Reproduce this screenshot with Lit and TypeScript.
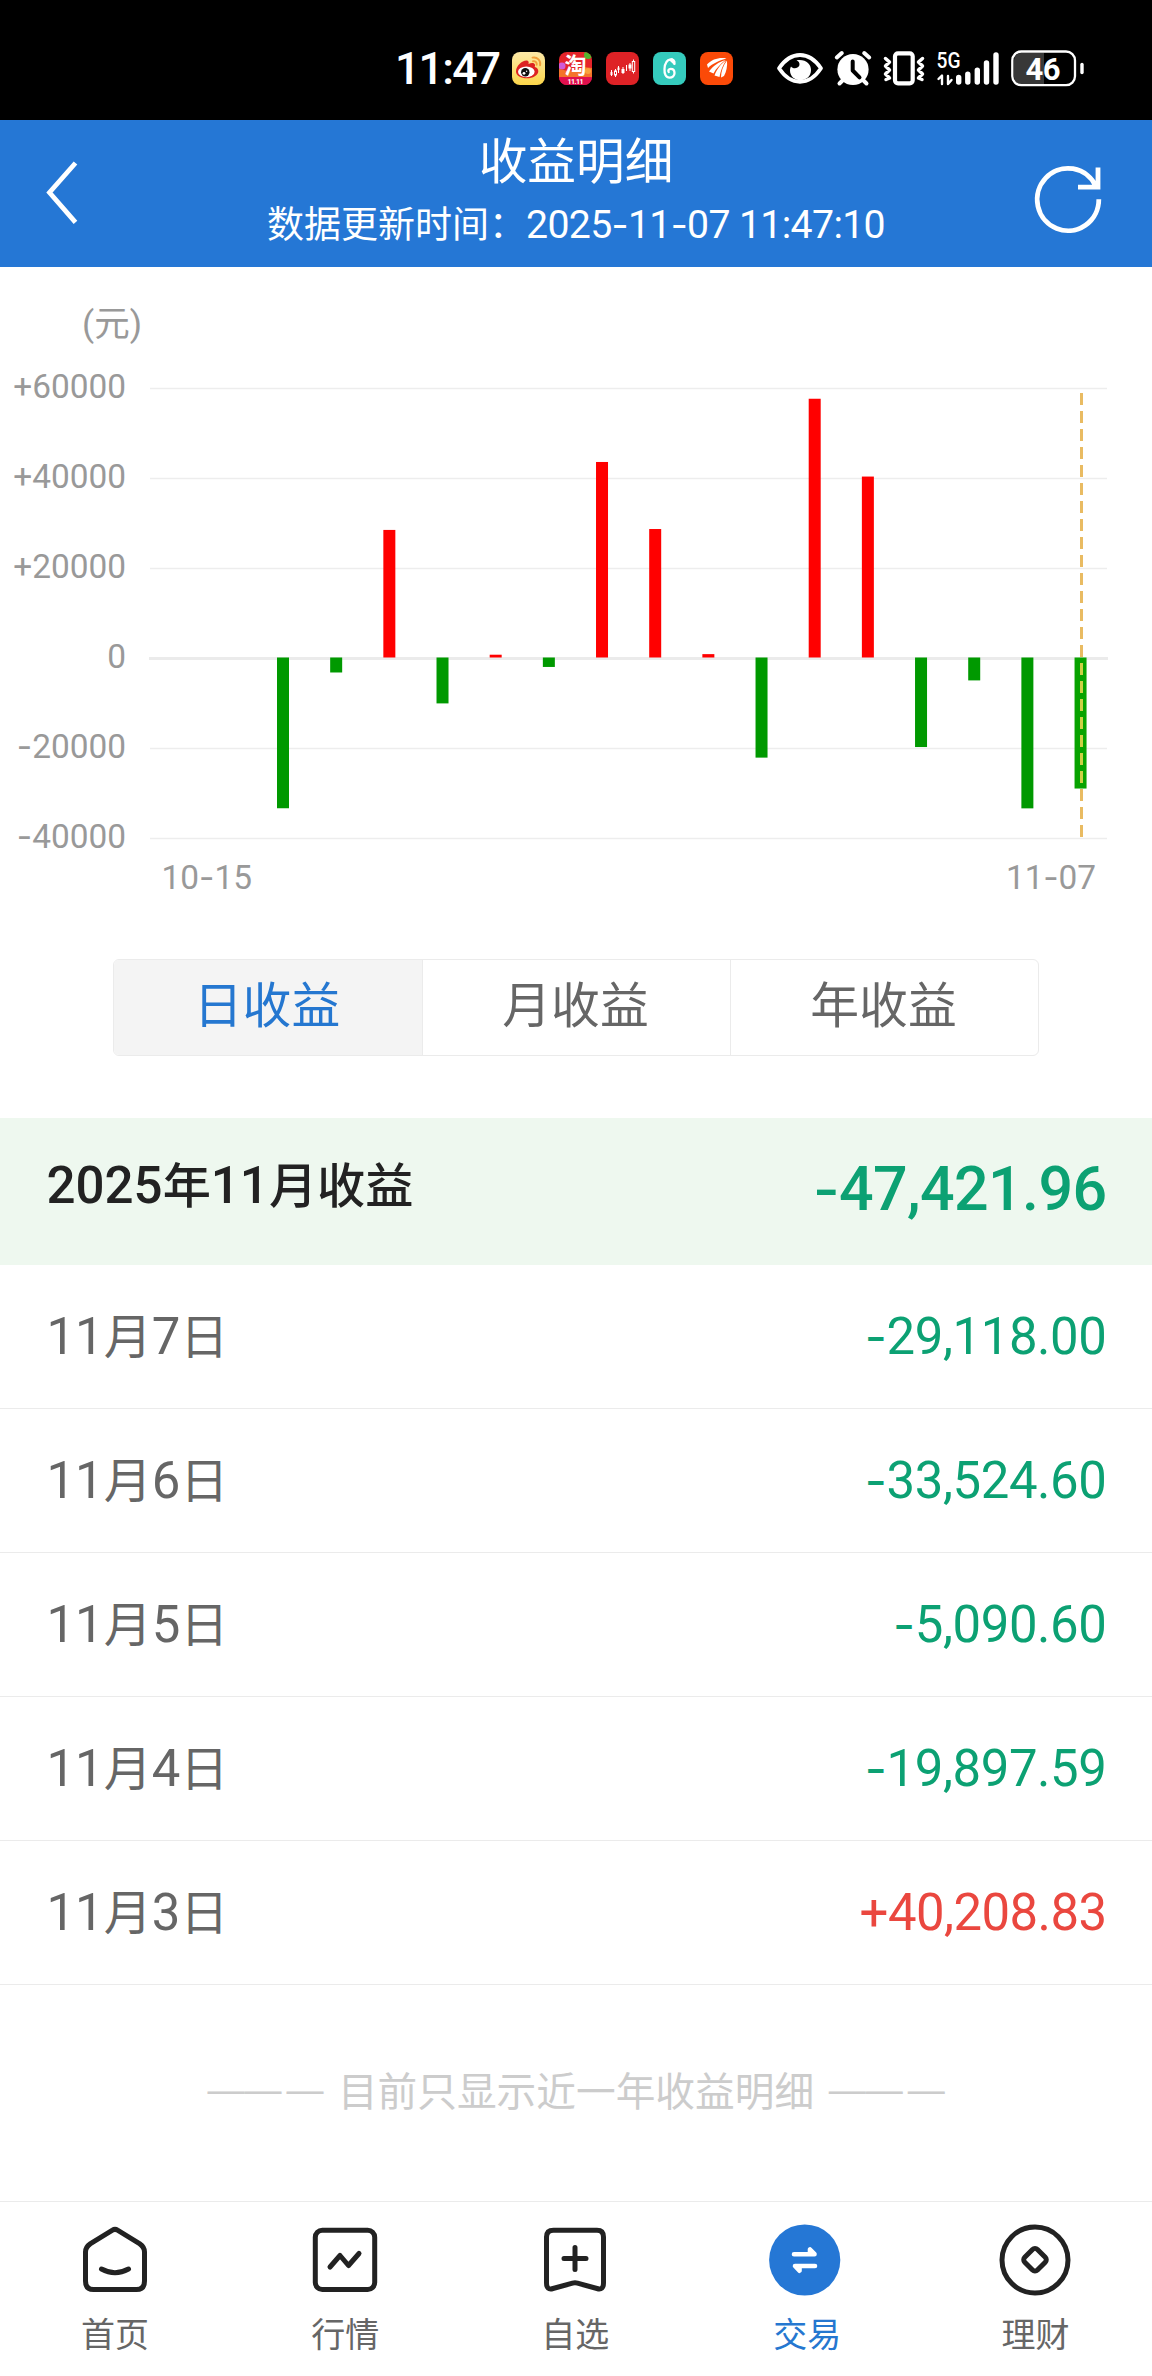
import { LitElement, html, svg, css, nothing } from "lit";
import { customElement, property, state } from "lit/decorators.js";
import { classMap } from "lit/directives/class-map.js";

const FONT = css`Roboto, "Noto Sans CJK SC", sans-serif`;

/** Splits mixed text so that digits and dashes can be sized apart from Chinese characters. */
const mixed = (text: string) =>
  (text.match(/-|[+0-9:., ]+|[^-+0-9:., ]+/g) ?? []).map((part) =>
    part === "-"
      ? html`<span class="dash">-</span>`
      : /^[+0-9:., ]+$/.test(part)
        ? html`<span class="num">${part}</span>`
        : part,
  );

const mixedStyles = css`
  .num { font-size: 1.06em; line-height: 0; }
  .dash { font-family: Inter, sans-serif; line-height: 0; }
`;

@customElement("status-bar")
class StatusBar extends LitElement {
  static styles = css`
    :host { display: block; background: #000; color: #fff; font-family: ${FONT}; }
    .bar { display: flex; align-items: center; height: 120px; padding: 17px 66px 0 395px; box-sizing: border-box; }
    .time { font-size: 44.5px; font-weight: 500; line-height: 48px; width: 117px; white-space: nowrap; letter-spacing: -1.7px; }
    .apps { display: flex; gap: 14px; }
    .system { display: flex; align-items: center; margin-left: auto; }
    svg { display: block; overflow: visible; }
    .tao { font: 700 22px "Noto Sans CJK SC", sans-serif; fill: #fff; }
    .sale { font: 700 7px Roboto, sans-serif; fill: #fff; }
    .net { font: 500 21.5px Roboto, sans-serif; fill: #fff; }
    .level { font: 700 31px Roboto, sans-serif; fill: #fff; }
  `;

  render() {
    return html`<div class="bar">
      <span class="time">11:47</span>
      <div class="apps">
        <svg width="33" height="33" viewBox="0 0 33 33">
          <defs><linearGradient id="wb" x1="0" y1="0" x2="0" y2="1"><stop offset="0" stop-color="#fde9a8" /><stop offset="1" stop-color="#fcd64a" /></linearGradient></defs>
          <rect width="33" height="33" rx="8" fill="url(#wb)" />
          <path d="M4 19.5C4 14 10 8.5 14.5 8.6c2.4.1 2.4 2 2 3.3 3-1.300 6-1.200 6.500.8.2 1-.1 1.800-.3 2.300 2.300.6 3.600 2 3.600 4.200 0 4.100-5.600 7.100-11.300 7.100C9 26.300 4 23.500 4 19.500z" fill="#dd2222" />
          <ellipse cx="14.300" cy="19.800" rx="8.300" ry="5.400" fill="#fff" />
          <circle cx="13.300" cy="20.300" r="4.200" fill="#111" />
          <circle cx="12" cy="21.300" r="1.400" fill="#fff" /><circle cx="14.600" cy="19.300" r=".7" fill="#fff" />
          <path d="M20.500 5.600c4.700-1 8.700 3 7.600 7.800M21 9.200c2.200-.5 4.200 1.300 3.700 3.600" fill="none" stroke="#f2a03a" stroke-width="1.900" stroke-linecap="round" />
        </svg>
        <svg width="33" height="33" viewBox="0 0 33 33">
          <defs><clipPath id="tb"><rect width="33" height="33" rx="8" /></clipPath></defs>
          <g clip-path="url(#tb)">
            <rect width="33" height="33" fill="#e5242a" />
            <circle cx="3" cy="14" r="3.500" fill="#d05ad8" /><circle cx="29" cy="3" r="4" fill="#53b52e" />
            <path d="M0 17l9 2 8-1 8-3 8 1v10H0z" fill="#f4742a" /><circle cx="29" cy="19" r="3" fill="#f9a23c" />
            <rect y="25" width="33" height="8" fill="#e0104e" />
          </g>
          <text class="tao" x="16.500" y="20.500" text-anchor="middle">淘</text>
          <text class="sale" x="16.500" y="31.500" text-anchor="middle" textLength="16">11.11</text>
        </svg>
        <svg width="33" height="33" viewBox="0 0 33 33">
          <rect width="33" height="33" rx="8" fill="#de2226" />
          <g fill="none" stroke="#fff" stroke-width="1"><path d="M5.500 18v6M9.500 17v8M12.500 14v7M17 15v7M20.500 13v6M24 11v8M27.500 7.500v14" />
            <rect x="8.500" y="19" width="2" height="4" fill="#de2226" /><rect x="26.300" y="9.500" width="2.400" height="10" fill="#de2226" /></g>
          <path d="M4.500 20h2v3h-2zM15.500 17h3v4h-3zM22.500 12.500h3v4h-3zM11.500 15.500h2v2.500h-2z" fill="#fff" />
        </svg>
        <svg width="33" height="33" viewBox="0 0 33 33">
          <rect width="33" height="33" rx="8" fill="#35cbbd" />
          <path d="M21.500 11.800c.5-3.600-2-4.700-4-4.400-3.900.5-5.700 4.600-6 9.600-.3 5.200 1.500 8.700 5 8.700 3 0 5-1.900 5-4.600s-1.700-4.300-3.800-4.300c-2 0-3 1.600-2 3.200" fill="none" stroke="#fff" stroke-width="2.300" stroke-linecap="round" />
          <path d="M16.500 8.500l2.500-2.800 3 4.500-.5 3z" fill="#fff" />
        </svg>
        <svg width="33" height="33" viewBox="0 0 33 33">
          <rect width="33" height="33" rx="8" fill="#fb4a08" />
          <path d="M7 12.500C12 7 20 5 26.500 6.500 20 8 12.500 11.500 8 16zM9 19.500C13 14 19.500 9.500 25.500 8 20.500 12 16 16.500 13.500 21.500zM14.500 23.500C17 17 21 11.500 26 8.500 22.500 14 20.500 19 19.500 25zM21 25.500c0-6 2-12 6-17 .5 6-.5 11-3 15.500z" fill="#fff" />
        </svg>
      </div>
      <div class="system">
        <svg width="309" height="40" viewBox="777 48 309 40" fill="none" stroke="#fff" stroke-linecap="round" stroke-linejoin="round">
          <path d="M779 67.300C785 58.500 792 54 800 54s15 4.500 21 13.300C815 76.300 808 80.800 800 80.800S785 76.300 779 67.300z" stroke-width="3.800" />
          <path d="M796.500 59.300c9-1.500 14.500 3.500 14.500 9.700 0 6-4.700 10.300-10.700 10.300-6 0-10.300-4.300-10.300-9.700 0-1.700.3-3 1-4.200 1.500 2.500 6.800 2.500 8.200-.6.900-2.200-.4-4.700-2.700-5.500z" fill="#fff" stroke="none" />
          <circle cx="853" cy="68.500" r="15.600" fill="#fff" stroke="none" />
          <path d="M836.800 56.500l5-4.500M869.200 56.500l-5-4.500M844 78l-4.500 4.500M862 78l4.500 4.500" stroke-width="4" />
          <path d="M852.700 60.500v9l6.800 6.800" stroke="#000" stroke-width="4" />
          <rect x="895" y="52.300" width="17.700" height="30" rx="3" stroke-width="4.200" />
          <path d="M885.500 57.500l4 3.500-4 4 4 4-4 4 4 4-3.500 1.500M922.500 57.500l-4 3.500 4 4-4 4 4 4-4 4 3.500 1.500" stroke-width="3.500" />
          <text class="net" x="936.500" y="67" stroke="none" textLength="24" lengthAdjust="spacingAndGlyphs">5G</text>
          <path d="M938.500 78l3.500-3.500V83M948 75v8l3.500-4" stroke-width="2.400" />
          <path d="M958.700 76.500v4.500M967.800 73.300V81M977.300 69.300V81M986.500 62V81M996 54V81" stroke-width="5.400" />
          <path d="M1044 52h-23a7 7 0 0 0-7 7v17a7 7 0 0 0 7 7h23z" fill="#383838" stroke="none" />
          <rect x="1012.300" y="50.500" width="62.700" height="33.700" rx="9" stroke-width="2.300" />
          <path d="M1082 63.500v8" stroke-width="3.400" />
          <text class="level" x="1043" y="78.500" stroke="none" text-anchor="middle" textLength="35">46</text>
        </svg>
      </div>
    </div>`;
  }
}

@customElement("page-header")
class PageHeader extends LitElement {
  @property() time = "";
  static styles = [
    mixedStyles,
    css`
      :host { display: block; background: #2577d5; color: #fff; font-family: ${FONT}; }
      .header { display: grid; grid-template-columns: 120px 1fr 120px; height: 147px; }
      .back { padding: 41px 0 0 44px; }
      .reload { padding: 43px 0 0; }
      .center { text-align: center; padding-top: 19px; white-space: nowrap; }
      .title { font-size: 48.7px; line-height: 48px; }
      .sub { font-size: 37px; line-height: 44px; margin-top: 17px; }
      .sub .num, .sub .dash { letter-spacing: -0.65px; }
      svg { display: block; fill: none; stroke: #fff; }
    `,
  ];
  render() {
    return html`<header class="header">
      <div class="back"><svg width="36" height="64" viewBox="44 161 36 64"><path d="M75.500 163L49.500 192.500l26 29.800" stroke-width="4.800" /></svg></div>
      <div class="center">
        <div class="title">收益明细</div>
        <div class="sub">${mixed(`数据更新时间：${this.time}`)}</div>
      </div>
      <div class="reload"><svg width="72" height="72" viewBox="1032 163 72 72" stroke-width="4.800">
        <path d="M1098.800 199.300A30.800 31.200 0 1 1 1096 186.500M1098 167.500V187.200H1078" />
      </svg></div>
    </header>`;
  }
}

@customElement("profit-chart")
class ProfitChart extends LitElement {
  @property({ attribute: false }) values: number[] = [];
  static styles = css`
    :host { display: block; }
    svg { display: block; }
    text { font-family: ${FONT}; font-size: 33.4px; fill: #999; }
    .sign { font-family: Inter, sans-serif; }
    .unit { font-size: 35.5px; }
  `;
  render() {
    const zero = 390.5;
    const scale = 90 / 20000;
    const ticks = [60000, 40000, 20000, 0, -20000, -40000];
    return html`<svg width="1152" height="692" viewBox="0 0 1152 692">
      <text class="unit" x="112" y="68.500" text-anchor="middle">(元)</text>
      ${ticks.map((t) => {
        const y = 391.5 - t * scale;
        const sign = t > 0 ? "+" : t < 0 ? "-" : "";
        return svg`
          ${t === 0
            ? svg`<path d="M149 ${y}H1108" stroke="#ebebeb" stroke-width="3" />`
            : svg`<path d="M150 ${y}H1107" stroke="#ededed" stroke-width="1.400" />`}
          <text x="126" y=${y + 9.7} text-anchor="end">${sign ? svg`<tspan class=${t < 0 ? "sign" : ""}>${sign}</tspan>` : nothing}${Math.abs(t)}</text>`;
      })}
      ${this.values.map((v, i) => {
        const h = Math.abs(v) * scale;
        const last = i === this.values.length - 1;
        return svg`<rect x=${277 + 53.17 * i} y=${v > 0 ? zero - h : zero} width="12" height=${h}
          fill=${v > 0 ? "#ff0000" : last ? "#08a300" : "#009900"} />`;
      })}
      <path d="M1081.500 126V570" stroke="#e9bb62" stroke-width="3" stroke-dasharray="12 6" />
      <path d="M1081.500 396V521" stroke="#cdd045" stroke-width="3" stroke-dasharray="12 6" />
      <text x="161.500" y="621.500" textLength="90.500">10<tspan class="sign">-</tspan>15</text>
      <text x="1006" y="621.500" textLength="90">11<tspan class="sign">-</tspan>07</text>
    </svg>`;
  }
}

@customElement("period-tabs")
class PeriodTabs extends LitElement {
  @state() private active = 0;
  static styles = css`
    :host { display: block; font-family: ${FONT}; }
    .tabs { display: grid; grid-template-columns: repeat(3, 1fr); height: 97px; margin: 0 113px; box-sizing: border-box; border: 1.500px solid #ebebeb; border-radius: 6px; overflow: hidden; }
    .tab { display: flex; align-items: center; justify-content: center; font-size: 48.8px; line-height: 48px; color: #666; border-left: 1px solid #ebebeb; padding: 0 2px 1px 0; }
    .tab:first-child { border-left: 0; }
    .active { background: #f4f4f4; color: #2577d0; }
  `;
  render() {
    return html`<div class="tabs">
      ${["日收益", "月收益", "年收益"].map(
        (label, i) => html`<div class=${classMap({ tab: true, active: i === this.active })} @click=${() => (this.active = i)}>${label}</div>`,
      )}
    </div>`;
  }
}

@customElement("profit-list")
class ProfitList extends LitElement {
  @property({ attribute: false }) rows: [string, string][] = [];
  static styles = [
    mixedStyles,
    css`
      :host { display: block; font-family: ${FONT}; }
      .summary, .row { display: flex; justify-content: space-between; box-sizing: border-box; padding: 0 45.5px 0 46.5px; font-size: 48px; line-height: 48px; white-space: nowrap; }
      .summary { height: 147px; background: #eef8ef; color: #222; font-weight: 500; }
      .summary .label { padding-top: 45px; font-size: 48.2px; }
      .summary .amount { padding-top: 49px; font-size: 57.5px; letter-spacing: -0.6px; }
      .row { height: 144px; border-bottom: 1.500px solid #ebebeb; }
      .row .label { padding-top: 49px; color: #666; }
      .row .amount { padding-top: 49px; letter-spacing: -0.4px; }
      .amount { color: #0ca173; }
      .row .up { color: #ea473f; letter-spacing: -0.55px; }
    `,
  ];
  render() {
    return html`<div class="summary"><span class="label">${mixed("2025年11月收益")}</span><span class="amount">${mixed("-47,421.96")}</span></div>
      ${this.rows.map(
        ([day, amount]) => html`<div class="row">
          <span class="label">${mixed(day)}</span>
          <span class=${classMap({ amount: true, up: amount.startsWith("+") })}>${mixed(amount)}</span>
        </div>`,
      )}`;
  }
}

const icons = {
  home: svg`<path d="M33.500 6.200Q36 4.600 38.500 6.200L60.500 19.600Q65.500 23 65.500 28V57Q65.500 65.500 57.500 65.500H14.500Q6.500 65.500 6.500 57V28Q6.500 23 11.500 19.600Z" /><path d="M22.500 45Q36 52.500 49.500 45" />`,
  quote: svg`<rect x="6.300" y="6.200" width="59.400" height="59.300" rx="7" /><path d="M21 43L31 31.500L39.500 41.500L50 29.500" />`,
  star: svg`<path d="M14.500 6.200H58Q64.500 6.200 64.500 13V59Q64.500 66.500 58 64.500L38.500 59.200Q36 58.500 33.500 59.200L14 64.500Q7.500 66.500 7.500 59V13Q7.500 6.200 14.500 6.200Z" /><path d="M25 34.500H47M36 23.500V45.500" />`,
  trade: svg`<circle cx="35.700" cy="36" r="35.600" fill="#2577d5" stroke="none" /><path d="M25 30.200H45.500L41 25.500V28M46 42H26L30.500 46.700V44" stroke="#fff" stroke-width="4.600" />`,
  wealth: svg`<circle cx="36" cy="36" r="33" /><rect x="27" y="26.700" width="18" height="18" rx="3.500" transform="rotate(45 36 35.700)" />`,
};

@customElement("tab-bar")
class TabBar extends LitElement {
  static styles = css`
    :host { display: block; font-family: ${FONT}; }
    .bar { display: grid; grid-template-columns: repeat(5, 1fr); height: 175px; box-sizing: border-box; border-top: 1.500px solid #ebebeb; padding: 22px 1.500px 0 0; }
    .item { display: flex; flex-direction: column; align-items: center; gap: 19px; font-size: 34px; line-height: 40px; color: #666; }
    .active { color: #2577d0; }
    .active span { padding-left: 4px; }
    svg { display: block; fill: none; stroke: #222; stroke-width: 5; stroke-linecap: round; stroke-linejoin: round; overflow: visible; }
  `;
  render() {
    const items: [keyof typeof icons, string][] = [["home", "首页"], ["quote", "行情"], ["star", "自选"], ["trade", "交易"], ["wealth", "理财"]];
    return html`<nav class="bar">
      ${items.map(
        ([icon, label]) => html`<div class=${classMap({ item: true, active: icon === "trade" })}>
          <svg width="72" height="72" viewBox="0 0 72 72">${icons[icon]}</svg><span>${label}</span>
        </div>`,
      )}
    </nav>`;
  }
}

@customElement("app-root")
class AppRoot extends LitElement {
  static styles = css`
    :host { display: block; font-family: ${FONT}; }
    .page { display: flex; flex-direction: column; width: 1152px; height: 2376px; background: #fff; overflow: hidden; }
    .list { margin-top: 62px; }
    .note { flex: 1; display: flex; align-items: center; justify-content: center; color: #ccc; font-size: 39.700px; line-height: 48px; white-space: nowrap; }
    .words { margin: 0 14.500px; }
    .rule { display: flex; gap: 5px; padding-bottom: 6px; font-size: 37px; font-family: "Liberation Sans", sans-serif; }
  `;

  private values = [-33500, -3330, 28350, -10200, 620, -2100, 43450, 28550, 750, -22250, 57500, 40208.83, -19897.59, -5090.6, -33524.6, -29118];

  private rows: [string, string][] = [
    ["11月7日", "-29,118.00"],
    ["11月6日", "-33,524.60"],
    ["11月5日", "-5,090.60"],
    ["11月4日", "-19,897.59"],
    ["11月3日", "+40,208.83"],
  ];

  render() {
    const rule = html`<span class="rule"><span>——</span><span>—</span></span>`;
    return html`<div class="page">
      <status-bar></status-bar>
      <page-header time="2025-11-07 11:47:10"></page-header>
      <profit-chart .values=${this.values}></profit-chart>
      <period-tabs></period-tabs>
      <profit-list class="list" .rows=${this.rows}></profit-list>
      <div class="note">${rule}<span class="words">目前只显示近一年收益明细</span>${rule}</div>
      <tab-bar></tab-bar>
    </div>`;
  }
}
